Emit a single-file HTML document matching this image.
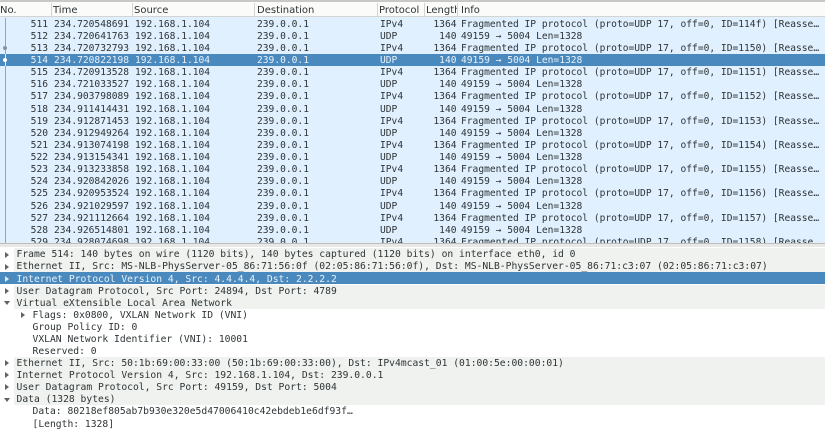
<!DOCTYPE html>
<html><head><meta charset="utf-8">
<style>
html,body{margin:0;padding:0;background:#fff}
#p{position:relative;width:825px;height:442px;overflow:hidden;background:#fff;font-family:"DejaVu Sans Mono","Liberation Mono",monospace;font-size:9.6px;color:#2e3436;filter:blur(.35px)}
.a{position:absolute}
.r{position:absolute;left:0;width:825px;height:12.1px;line-height:12.1px;white-space:pre}
.r span{position:absolute;top:1px}
.s{background:#4a89bd;color:#e8f2fa}
.n{right:777px}.t{left:54px}.c{left:135px}.d{left:257px}.o{left:380px}.l{right:368.5px}.i{left:461px}
.h{position:absolute;top:3px;height:14px;font:10px/14px "DejaVu Sans","Liberation Sans",sans-serif;color:#2e3436;white-space:pre;overflow:hidden}
.h em{font-style:normal;position:relative;top:1px}
.v{position:absolute;top:3px;width:1px;height:14px;background:#d4d4d2}
.x{position:absolute;left:0;width:825px;height:12.1px;line-height:12.1px;white-space:pre;font-size:9.69px}
.x b{font-weight:normal;position:absolute;top:1px}
.e{background:#eff2ef;left:14px;width:811px}
.q{position:absolute;width:0;height:0;border-top:3px solid transparent;border-bottom:3px solid transparent;border-left:4px solid #5f6361}
.w{position:absolute;width:0;height:0;border-left:3px solid transparent;border-right:3px solid transparent;border-top:4px solid #5f6361}
</style></head><body><div id="p">
<div class="a" style="left:0;top:0;width:825px;height:2px;background:#c8c8c6"></div>
<div class="a" style="left:0;top:2px;width:825px;height:15px;background:#fbfbfa;border-bottom:1px solid #d4d4d2;box-sizing:border-box"></div>
<div class="h" style="left:0;width:50px"><em>No.</em></div>
<div class="h" style="left:53px;width:80px"><em>Time</em></div>
<div class="h" style="left:134px;width:120px"><em>Source</em></div>
<div class="h" style="left:257px;width:120px"><em>Destination</em></div>
<div class="h" style="left:379px;width:46px"><em>Protocol</em></div>
<div class="h" style="left:426px;width:31px"><em>Length</em></div>
<div class="h" style="left:461px;width:60px"><em>Info</em></div>
<div class="v" style="left:51px"></div><div class="v" style="left:132px"></div><div class="v" style="left:254px"></div><div class="v" style="left:377px"></div><div class="v" style="left:424px"></div><div class="v" style="left:457px"></div>

<div class="a" style="left:0;top:17px;width:825px;height:227px;background:#e0f0ff"></div>

<div class="r" style="top:17.7px"><span class="n">511</span><span class="t">234.720548691</span><span class="c">192.168.1.104</span><span class="d">239.0.0.1</span><span class="o">IPv4</span><span class="l">1364</span><span class="i">Fragmented IP protocol (proto=UDP 17, off=0, ID=114f) [Reasse…</span></div>
<div class="r" style="top:29.8px"><span class="n">512</span><span class="t">234.720641763</span><span class="c">192.168.1.104</span><span class="d">239.0.0.1</span><span class="o">UDP</span><span class="l">140</span><span class="i">49159 → 5004 Len=1328</span></div>
<div class="r" style="top:41.9px"><span class="n">513</span><span class="t">234.720732793</span><span class="c">192.168.1.104</span><span class="d">239.0.0.1</span><span class="o">IPv4</span><span class="l">1364</span><span class="i">Fragmented IP protocol (proto=UDP 17, off=0, ID=1150) [Reasse…</span></div>
<div class="r s" style="top:54px"><span class="n">514</span><span class="t">234.720822198</span><span class="c">192.168.1.104</span><span class="d">239.0.0.1</span><span class="o">UDP</span><span class="l">140</span><span class="i">49159 → 5004 Len=1328</span></div>
<div class="r" style="top:66.1px"><span class="n">515</span><span class="t">234.720913528</span><span class="c">192.168.1.104</span><span class="d">239.0.0.1</span><span class="o">IPv4</span><span class="l">1364</span><span class="i">Fragmented IP protocol (proto=UDP 17, off=0, ID=1151) [Reasse…</span></div>
<div class="r" style="top:78.3px"><span class="n">516</span><span class="t">234.721033527</span><span class="c">192.168.1.104</span><span class="d">239.0.0.1</span><span class="o">UDP</span><span class="l">140</span><span class="i">49159 → 5004 Len=1328</span></div>
<div class="r" style="top:90.4px"><span class="n">517</span><span class="t">234.903798089</span><span class="c">192.168.1.104</span><span class="d">239.0.0.1</span><span class="o">IPv4</span><span class="l">1364</span><span class="i">Fragmented IP protocol (proto=UDP 17, off=0, ID=1152) [Reasse…</span></div>
<div class="r" style="top:102.5px"><span class="n">518</span><span class="t">234.911414431</span><span class="c">192.168.1.104</span><span class="d">239.0.0.1</span><span class="o">UDP</span><span class="l">140</span><span class="i">49159 → 5004 Len=1328</span></div>
<div class="r" style="top:114.6px"><span class="n">519</span><span class="t">234.912871453</span><span class="c">192.168.1.104</span><span class="d">239.0.0.1</span><span class="o">IPv4</span><span class="l">1364</span><span class="i">Fragmented IP protocol (proto=UDP 17, off=0, ID=1153) [Reasse…</span></div>
<div class="r" style="top:126.8px"><span class="n">520</span><span class="t">234.912949264</span><span class="c">192.168.1.104</span><span class="d">239.0.0.1</span><span class="o">UDP</span><span class="l">140</span><span class="i">49159 → 5004 Len=1328</span></div>
<div class="r" style="top:138.9px"><span class="n">521</span><span class="t">234.913074198</span><span class="c">192.168.1.104</span><span class="d">239.0.0.1</span><span class="o">IPv4</span><span class="l">1364</span><span class="i">Fragmented IP protocol (proto=UDP 17, off=0, ID=1154) [Reasse…</span></div>
<div class="r" style="top:151px"><span class="n">522</span><span class="t">234.913154341</span><span class="c">192.168.1.104</span><span class="d">239.0.0.1</span><span class="o">UDP</span><span class="l">140</span><span class="i">49159 → 5004 Len=1328</span></div>
<div class="r" style="top:163.1px"><span class="n">523</span><span class="t">234.913233858</span><span class="c">192.168.1.104</span><span class="d">239.0.0.1</span><span class="o">IPv4</span><span class="l">1364</span><span class="i">Fragmented IP protocol (proto=UDP 17, off=0, ID=1155) [Reasse…</span></div>
<div class="r" style="top:175.3px"><span class="n">524</span><span class="t">234.920842026</span><span class="c">192.168.1.104</span><span class="d">239.0.0.1</span><span class="o">UDP</span><span class="l">140</span><span class="i">49159 → 5004 Len=1328</span></div>
<div class="r" style="top:187.4px"><span class="n">525</span><span class="t">234.920953524</span><span class="c">192.168.1.104</span><span class="d">239.0.0.1</span><span class="o">IPv4</span><span class="l">1364</span><span class="i">Fragmented IP protocol (proto=UDP 17, off=0, ID=1156) [Reasse…</span></div>
<div class="r" style="top:199.5px"><span class="n">526</span><span class="t">234.921029597</span><span class="c">192.168.1.104</span><span class="d">239.0.0.1</span><span class="o">UDP</span><span class="l">140</span><span class="i">49159 → 5004 Len=1328</span></div>
<div class="r" style="top:211.6px"><span class="n">527</span><span class="t">234.921112664</span><span class="c">192.168.1.104</span><span class="d">239.0.0.1</span><span class="o">IPv4</span><span class="l">1364</span><span class="i">Fragmented IP protocol (proto=UDP 17, off=0, ID=1157) [Reasse…</span></div>
<div class="r" style="top:223.8px"><span class="n">528</span><span class="t">234.926514801</span><span class="c">192.168.1.104</span><span class="d">239.0.0.1</span><span class="o">UDP</span><span class="l">140</span><span class="i">49159 → 5004 Len=1328</span></div>
<div class="r" style="top:235.9px"><span class="n">529</span><span class="t">234.928074698</span><span class="c">192.168.1.104</span><span class="d">239.0.0.1</span><span class="o">IPv4</span><span class="l">1364</span><span class="i">Fragmented IP protocol (proto=UDP 17, off=0, ID=1158) [Reasse…</span></div>

<div class="a" style="left:5px;top:18px;width:1px;height:225px;background:#9aa3aa"></div>
<div class="a" style="left:3px;top:46px;width:4px;height:4px;border-radius:50%;background:#8a949c"></div>
<div class="a" style="left:5px;top:54px;width:1px;height:12px;background:#e8f2fa"></div>
<div class="a" style="left:3px;top:58px;width:4px;height:4px;border-radius:50%;background:#fff"></div>

<div class="a" style="left:0;top:243px;width:825px;height:199px;background:#fff"></div>
<div class="a" style="left:0;top:243px;width:825px;height:4px;background:#e8e8e6;border-top:1px solid #bdbdbb;box-sizing:border-box"></div>

<div class="x e" style="top:248.3px"></div>
<div class="x e" style="top:260.4px"></div>
<div class="x" style="top:272.4px;background:#4a89bd"></div>
<div class="x e" style="top:284.6px"></div>
<div class="x e" style="top:296.7px"></div>
<div class="x e" style="top:357px"></div>
<div class="x e" style="top:369.1px"></div>
<div class="x e" style="top:381.2px"></div>
<div class="x e" style="top:393.3px"></div>

<div class="q" style="left:5px;top:251.5px"></div>
<div class="q" style="left:5px;top:263.5px"></div>
<div class="q" style="left:5px;top:275.5px;border-left-color:#dfe9f2"></div>
<div class="q" style="left:5px;top:287.5px"></div>
<div class="w" style="left:4px;top:301px"></div>
<div class="q" style="left:21px;top:311.5px"></div>
<div class="q" style="left:5px;top:360px"></div>
<div class="q" style="left:5px;top:372px"></div>
<div class="q" style="left:5px;top:384px"></div>
<div class="w" style="left:4px;top:398px"></div>

<div class="x" style="top:248.3px"><b style="left:16.5px">Frame 514: 140 bytes on wire (1120 bits), 140 bytes captured (1120 bits) on interface eth0, id 0</b></div>
<div class="x" style="top:260.4px"><b style="left:16.5px">Ethernet II, Src: MS-NLB-PhysServer-05_86:71:56:0f (02:05:86:71:56:0f), Dst: MS-NLB-PhysServer-05_86:71:c3:07 (02:05:86:71:c3:07)</b></div>
<div class="x" style="top:272.5px;color:#e8f2fa"><b style="left:16.5px">Internet Protocol Version 4, Src: 4.4.4.4, Dst: 2.2.2.2</b></div>
<div class="x" style="top:284.6px"><b style="left:16.5px">User Datagram Protocol, Src Port: 24894, Dst Port: 4789</b></div>
<div class="x" style="top:296.7px"><b style="left:16.5px">Virtual eXtensible Local Area Network</b></div>
<div class="x" style="top:308.8px"><b style="left:32.5px">Flags: 0x0800, VXLAN Network ID (VNI)</b></div>
<div class="x" style="top:320.9px"><b style="left:32.5px">Group Policy ID: 0</b></div>
<div class="x" style="top:333px"><b style="left:32.5px">VXLAN Network Identifier (VNI): 10001</b></div>
<div class="x" style="top:345px"><b style="left:32.5px">Reserved: 0</b></div>
<div class="x" style="top:357px"><b style="left:16.5px">Ethernet II, Src: 50:1b:69:00:33:00 (50:1b:69:00:33:00), Dst: IPv4mcast_01 (01:00:5e:00:00:01)</b></div>
<div class="x" style="top:369.1px"><b style="left:16.5px">Internet Protocol Version 4, Src: 192.168.1.104, Dst: 239.0.0.1</b></div>
<div class="x" style="top:381.2px"><b style="left:16.5px">User Datagram Protocol, Src Port: 49159, Dst Port: 5004</b></div>
<div class="x" style="top:393.3px"><b style="left:16.5px">Data (1328 bytes)</b></div>
<div class="x" style="top:405.4px"><b style="left:32.5px">Data: 80218ef805ab7b930e320e5d47006410c42ebdeb1e6df93f…</b></div>
<div class="x" style="top:417.5px"><b style="left:32.5px">[Length: 1328]</b></div>
</div></body></html>
